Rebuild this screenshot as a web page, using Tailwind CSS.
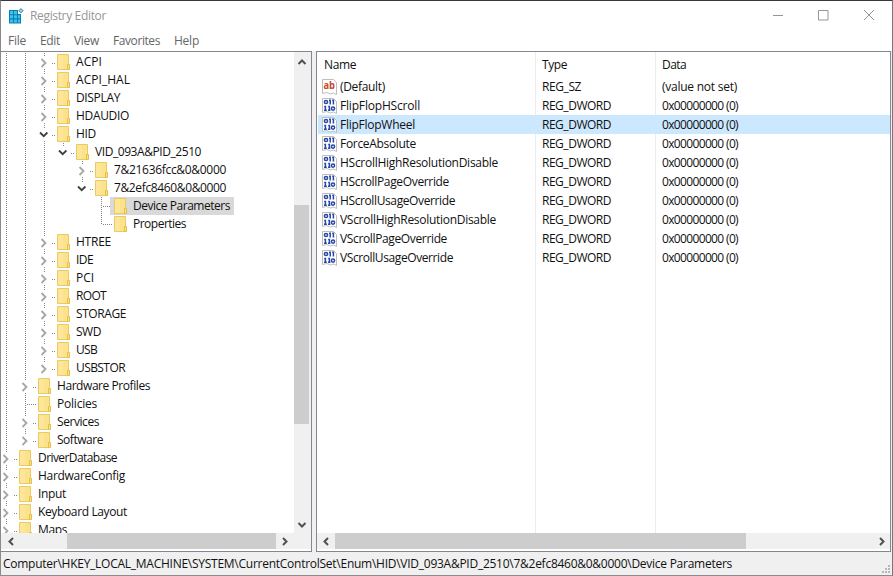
<!-- index.html -->
<!DOCTYPE html>
<html lang="en">
  <head>
    <meta charset="UTF-8" />
    <meta name="viewport" content="width=device-width, initial-scale=1.0" />
    <title>Registry Editor</title>
    <script src="https://cdn.jsdelivr.net/npm/@tailwindcss/browser@4"></script>
  </head>
  <body class="bg-white font-['Open_Sans',sans-serif] text-[12px] text-[#111] overflow-hidden">
    <div class="w-[893px] h-[576px] flex flex-col border-t border-t-[#3b383f] border-l border-l-[#8a8a8c] border-r border-r-[#77777b] border-b border-b-[#8c8c8c]">
      <!-- Title bar -->
      <div class="h-[30px] shrink-0 flex items-center text-[#969696]">
        <svg class="w-4 h-4 ml-[7px]" viewBox="0 0 16 16">
          <path fill="#0b7db0" d="M1 2h9v4h3v9.500H1z" />
          <path fill="#3cc4ee" d="M2 3h3v3.300H2zM6 3h3v3.300H6zM2 7.300h3v3H2zM6 7.300h3v3H6zM10 7.300h2v3h-2zM2 11.500h3v3H2zM6 11.500h3v3H6zM10 11.500h2v3h-2z" />
          <path fill="#a6e4f7" stroke="#1b6f93" stroke-width="1" d="M13 .7l2 2-2 2-2-2z" />
        </svg>
        <span class="ml-[6px] text-fit" data-width="76">Registry Editor</span>
        <div class="ml-auto -mr-px flex items-center">
          <svg class="w-[46px] h-[30px]" viewBox="0 0 46 30" fill="none" stroke="currentColor"><path d="M18 14.500h10" /></svg>
          <svg class="w-[46px] h-[30px]" viewBox="0 0 46 30" fill="none" stroke="currentColor"><path d="M17.500 9.500h9.500v9.500h-9.500z" /></svg>
          <svg class="w-[46px] h-[30px]" viewBox="0 0 46 30" fill="none" stroke="currentColor"><path d="M17 9l10 10M27 9l-10 10" /></svg>
        </div>
      </div>

      <!-- Menu -->
      <div class="h-5 shrink-0 flex items-center pl-[7px] text-[#666]">
        <div class="w-8"><span class="text-fit" data-width="18">File</span></div>
        <div class="w-[34px]"><span class="text-fit" data-width="20">Edit</span></div>
        <div class="w-[39px]"><span class="text-fit" data-width="25">View</span></div>
        <div class="w-[61px]"><span class="text-fit" data-width="47">Favorites</span></div>
        <div><span class="text-fit" data-width="25">Help</span></div>
      </div>

      <!-- Panes -->
      <div class="h-[501px] shrink-0 flex bg-[#f0f0f0]">
        <div class="w-[311px] flex flex-col border border-[#828790] border-l-0 bg-white">
          <div class="h-[481px] flex">
            <div id="tree" class="w-[293px] overflow-hidden pt-px"></div>
            <div class="w-[17px] bg-[#f0f0f0] flex flex-col items-center">
              <svg class="w-[17px] h-[21px]" viewBox="0 0 17 21" fill="none" stroke="#505050" stroke-width="2"><path d="M4.500 12l3.500-3.500 3.500 3.500" /></svg>
              <div class="mt-[132px] mr-0.5 w-[15px] h-[219px] bg-[#cdcdcd]"></div>
              <svg class="mt-auto w-[17px] h-[17px]" viewBox="0 0 17 17" fill="none" stroke="#505050" stroke-width="2"><path d="M4.500 7l3.500 3.500L11.500 7" /></svg>
            </div>
          </div>
          <div class="h-[16px] flex items-center bg-[#f0f0f0]">
            <svg class="w-[17px] h-4" viewBox="0 0 17 16" fill="none" stroke="#505050" stroke-width="2"><path d="M12 5L8.500 8.500 12 12" /></svg>
            <div class="ml-[49px] w-[209px] h-4 bg-[#cdcdcd]"></div>
            <svg class="w-[17px] h-4" viewBox="0 0 17 16" fill="none" stroke="#505050" stroke-width="2"><path d="M7 5l3.500 3.500L7 12" /></svg>
          </div>
        </div>

        <div class="ml-[4px] w-[575px] flex flex-col border border-[#828790] bg-white">
          <div class="h-[481px] flex flex-col bg-[linear-gradient(90deg,transparent_218px,#ececf0_218px,#ececf0_219px,transparent_219px,transparent_338px,#ececf0_338px,#ececf0_339px,transparent_339px)]">
            <div class="h-[25px] flex items-center pl-[7px]">
              <div class="w-[218px]"><span class="text-fit" data-width="32">Name</span></div>
              <div class="w-[120px]"><span class="text-fit" data-width="25">Type</span></div>
              <div><span class="text-fit" data-width="24">Data</span></div>
            </div>
            <div id="values" class="ml-px"></div>
          </div>
          <div class="h-4 flex items-center bg-[#f0f0f0]">
            <svg class="w-[18px] h-4" viewBox="0 0 18 16" fill="none" stroke="#505050" stroke-width="2"><path d="M11 5L7.500 8.500 11 12" /></svg>
            <div class="w-[411px] h-4 bg-[#cdcdcd]"></div>
            <svg class="ml-auto w-[17px] h-4" viewBox="0 0 17 16" fill="none" stroke="#505050" stroke-width="2"><path d="M7 5l3.500 3.500L7 12" /></svg>
          </div>
        </div>
      </div>

      <!-- Status bar -->
      <div class="flex-1 flex items-center justify-between bg-[#f0f0f0] pl-[2px] pr-[2px] pt-px">
        <span class="text-fit" data-width="729">Computer\HKEY_LOCAL_MACHINE\SYSTEM\CurrentControlSet\Enum\HID\VID_093A&amp;PID_2510\7&amp;2efc8460&amp;0&amp;0000\Device Parameters</span>
        <svg class="w-2 h-2 self-end mb-0.5" viewBox="0 0 8 8" fill="#b8b8b8"><path d="M6 0h2v2H6zM3 3h2v2H3zM6 3h2v2H6zM0 6h2v2H0zM3 6h2v2H3zM6 6h2v2H6z" /></svg>
      </div>
    </div>

    <script>
      // [depth, label, label width, state, depths with a line running past]
      const nodes = [
        [2, "ACPI", 26, "closed", [0, 1]],
        [2, "ACPI_HAL", 54, "closed", [0, 1]],
        [2, "DISPLAY", 44, "closed", [0, 1]],
        [2, "HDAUDIO", 53, "closed", [0, 1]],
        [2, "HID", 20, "open", [0, 1]],
        [3, "VID_093A&PID_2510", 106, "open", [0, 1, 2], "last"],
        [4, "7&21636fcc&0&0000", 112, "closed", [0, 1, 2]],
        [4, "7&2efc8460&0&0000", 112, "open", [0, 1, 2], "last"],
        [5, "Device Parameters", 97, "leaf", [0, 1, 2], "selected"],
        [5, "Properties", 53, "leaf", [0, 1, 2], "last"],
        [2, "HTREE", 35, "closed", [0, 1]],
        [2, "IDE", 17, "closed", [0, 1]],
        [2, "PCI", 18, "closed", [0, 1]],
        [2, "ROOT", 30, "closed", [0, 1]],
        [2, "STORAGE", 50, "closed", [0, 1]],
        [2, "SWD", 25, "closed", [0, 1]],
        [2, "USB", 21, "closed", [0, 1]],
        [2, "USBSTOR", 49, "closed", [0, 1], "last"],
        [1, "Hardware Profiles", 93, "closed", [0]],
        [1, "Policies", 40, "leaf", [0]],
        [1, "Services", 42, "closed", [0]],
        [1, "Software", 46, "closed", [0], "last"],
        [0, "DriverDatabase", 79, "closed", []],
        [0, "HardwareConfig", 87, "closed", []],
        [0, "Input", 28, "closed", []],
        [0, "Keyboard Layout", 89, "closed", []],
        [0, "Maps", 29, "closed", []],
      ];

      const folder = `
        <svg class="w-[13px] h-4 ml-[3px] shrink-0" viewBox="0 0 13 16">
          <path fill="#fbe28b" stroke="#e9cb62" d="M.5.5h11v15H.5z" />
          <path fill="#fde69a" d="M1 1h5v14H1z" />
          <path fill="#fbe28b" stroke="#e3bf47" d="M10.500 10.500h2v5h-2z" />
        </svg>`;

      function guide(path) {
        return `<svg class="w-[19px] h-[18px] shrink-0 overflow-visible" viewBox="0 0 19 18" fill="none">${path}</svg>`;
      }

      function dotted(d) {
        return `<path d="${d}" stroke="#858585" stroke-dasharray="1 1" />`;
      }

      function treeRow([depth, label, width, state, lines, flag]) {
        let cells = "";
        for (let i = 0; i < depth; i++) {
          cells += guide(lines.includes(i) ? dotted("M9.500 0v18") : "");
        }
        if (state === "leaf") {
          cells += guide(dotted(flag === "last" ? "M9.500 0v10" : "M9.500 0v18") + dotted("M11 9.500h10"));
        } else {
          cells += guide(
            dotted("M9.500 0v3") +
              (flag === "last" ? "" : dotted("M9.500 16v2")) +
              dotted("M17 10.500h4") +
              (state === "open"
                ? '<path d="M5 7.500l3.700 3.700 3.700-3.700" stroke="#404040" stroke-width="1.800" />'
                : '<path d="M6.500 6l4 4-4 4" stroke="#a6a6a6" stroke-width="1.800" />')
          );
        }
        return `
          <div class="h-[18px] flex items-center -ml-1 whitespace-nowrap">
            ${cells}
            <div class="h-[18px] flex items-center ${flag === "selected" ? "bg-[#d9d9d9] pr-[4px] -ml-px pl-px" : ""}">
              ${folder}
              <span class="ml-[6px] text-fit" data-width="${width}">${label.replace(/&/g, "&amp;")}</span>
            </div>
          </div>`;
      }

      const values = [
        ["(Default)", 45],
        ["FlipFlopHScroll", 80],
        ["FlipFlopWheel", 75],
        ["ForceAbsolute", 76],
        ["HScrollHighResolutionDisable", 158],
        ["HScrollPageOverride", 109],
        ["HScrollUsageOverride", 115],
        ["VScrollHighResolutionDisable", 156],
        ["VScrollPageOverride", 107],
        ["VScrollUsageOverride", 113],
      ];

      const page = '<path fill="#fff" stroke="#bdbdbd" d="M.5.5h11l3 3v12l-3-1.500-3 1-4-1.500-4 1z" />';
      const stringIcon = `
        <svg class="w-[15px] h-4 shrink-0" viewBox="0 0 15 16">
          ${page}
          <text x="1.500" y="10" font-size="10" font-weight="700" textLength="11.500" lengthAdjust="spacingAndGlyphs" fill="#c8452a">ab</text>
        </svg>`;
      const binaryIcon = `
        <svg class="w-[15px] h-4 shrink-0" viewBox="0 0 15 16">
          ${page}
          <g fill="none" stroke="#2746a8" stroke-width="1.500">
            <circle cx="4" cy="4" r="1.600" />
            <path d="M7 2.200h1.200V6.500M10.200 2.200h1.200V6.500" />
            <path d="M2.200 8.500h1.200v4M6.200 8.500h1.200v4M2 12.300h2.800M6 12.300h2.400" />
            <circle cx="11" cy="10.600" r="1.600" />
          </g>
        </svg>`;

      function valueRow([name, width], i) {
        const isString = i === 0;
        return `
          <div class="h-[19px] flex items-center pl-1 ${i === 2 ? "bg-[#cce8ff]" : ""}">
            <div class="w-[220px] flex items-center gap-[3px] whitespace-nowrap">
              ${isString ? stringIcon : binaryIcon}
              <span class="text-fit" data-width="${width}">${name}</span>
            </div>
            <div class="w-[120px]"><span class="text-fit" data-width="${isString ? 39 : 69}">${isString ? "REG_SZ" : "REG_DWORD"}</span></div>
            <div><span class="text-fit" data-width="${isString ? 75 : 76}">${isString ? "(value not set)" : "0x00000000 (0)"}</span></div>
          </div>`;
      }

      document.getElementById("tree").innerHTML = nodes.map(treeRow).join("");
      document.getElementById("values").innerHTML = values.map(valueRow).join("");

      const ctx = document.createElement("canvas").getContext("2d");
      ctx.font = '12px "Open Sans"';
      document.querySelectorAll(".text-fit").forEach((el) => {
        const text = el.textContent;
        const gap = (Number(el.dataset.width) - ctx.measureText(text).width) / text.length;
        el.style.whiteSpace = "nowrap";
        el.style.letterSpacing = `${gap}px`;
      });
    </script>
  </body>
</html>
